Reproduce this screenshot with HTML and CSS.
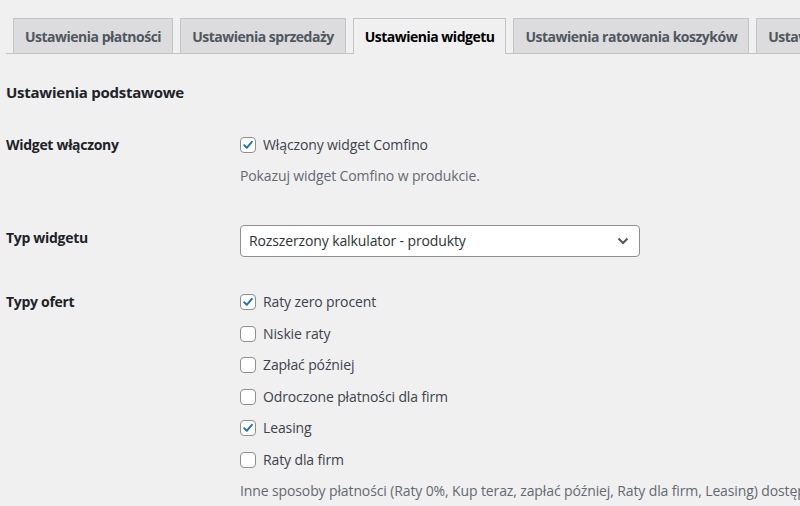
FILE: index.html
```html
<!DOCTYPE html>
<html lang="pl">
<head>
<meta charset="utf-8">
<link rel="stylesheet" href="styles.css">
</head>
<body>
<div class="wrap">
  <nav class="tabs">
    <a class="tab">Ustawienia płatności</a>
    <a class="tab">Ustawienia sprzedaży</a>
    <a class="tab active">Ustawienia widgetu</a>
    <a class="tab">Ustawienia ratowania koszyków</a>
    <a class="tab">Ustawienia zaawansowane</a>
  </nav>
  <h2 class="section-title">Ustawienia podstawowe</h2>

  <div class="row row-1">
    <div class="label">Widget włączony</div>
    <div class="field">
      <label class="check"><span class="box checked"><svg viewBox="0 0 16 16"><path d="M3.6 8.2 L6.6 11.2 L12.4 4.4"/></svg></span>Włączony widget Comfino</label>
      <p class="desc">Pokazuj widget Comfino w produkcie.</p>
    </div>
  </div>

  <div class="row row-2">
    <div class="label label-select">Typ widgetu</div>
    <div class="field">
      <div class="select">Rozszerzony kalkulator - produkty<svg class="chev" viewBox="0 0 12 8"><path d="M1.5 1.5 L6 6 L10.5 1.5"/></svg></div>
    </div>
  </div>

  <div class="row row-3">
    <div class="label">Typy ofert</div>
    <div class="field">
      <label class="check opt"><span class="box checked"><svg viewBox="0 0 16 16"><path d="M3.6 8.2 L6.6 11.2 L12.4 4.4"/></svg></span>Raty zero procent</label>
      <label class="check opt"><span class="box"></span>Niskie raty</label>
      <label class="check opt"><span class="box"></span>Zapłać później</label>
      <label class="check opt"><span class="box"></span>Odroczone płatności dla firm</label>
      <label class="check opt"><span class="box checked"><svg viewBox="0 0 16 16"><path d="M3.6 8.2 L6.6 11.2 L12.4 4.4"/></svg></span>Leasing</label>
      <label class="check opt"><span class="box"></span>Raty dla firm</label>
      <p class="desc desc-last">Inne sposoby płatności (Raty 0%, Kup teraz, zapłać później, Raty dla firm, Leasing) dostępne po zalogowaniu.</p>
    </div>
  </div>
</div>
</body>
</html>
```
FILE: styles.css
```css
html, body {
  margin: 0;
  padding: 0;
  background: #f0f0f1;
  overflow: hidden;
  width: 800px;
  height: 506px;
}
body {
  font-family: "Open Sans", "Noto Sans", sans-serif;
  font-size: 14px;
  letter-spacing: -0.12px;
  color: #3c434a;
}
.wrap {
  padding-left: 6px;
}
.tabs {
  display: flex;
  gap: 7px;
  padding: 18px 0 0 7px;
  border-bottom: 1px solid #c3c4c7;
  white-space: nowrap;
  height: 35px;
  box-sizing: content-box;
}
.tab {
  flex: none;
  display: block;
  background: #dcdcde;
  border: 1px solid #c3c4c7;
  border-bottom: none;
  padding: 5px 11px 5px 11px;
  line-height: 25px;
  font-weight: 700;
  letter-spacing: -0.5px;
  color: #50575e;
  font-size: 14px;
}
.tab.active {
  background: #f0f0f1;
  color: #000;
  margin-bottom: -1px;
  padding-bottom: 6px;
}
.section-title {
  margin: 28px 0 0;
  font-size: 15px;
  line-height: 20px;
  font-weight: 700;
  letter-spacing: -0.25px;
  color: #1d2327;
}
.row {
  display: grid;
  grid-template-columns: 234px 1fr;
}
.row-1 { padding-top: 33px; }
.row-2 { padding-top: 39px; }
.row-3 { padding-top: 35px; }
.label {
  font-weight: 700;
  letter-spacing: -0.3px;
  color: #1d2327;
  line-height: 20px;
}
.label-select { padding-top: 3px; }
.field { min-width: 0; }
.check {
  display: flex;
  align-items: center;
  gap: 7px;
  line-height: 20px;
  white-space: nowrap;
}
.opt { margin-bottom: 11.6px; }
.box {
  width: 16px;
  height: 16px;
  box-sizing: border-box;
  border: 1px solid #8c8f94;
  border-radius: 4px;
  background: #fff;
  display: inline-flex;
  flex: none;
}
.box svg {
  width: 14px;
  height: 14px;
  fill: none;
  stroke: #2271b1;
  stroke-width: 2.2;
  stroke-linecap: round;
  stroke-linejoin: round;
}
.desc {
  margin: 11px 0 0;
  line-height: 20px;
  color: #646970;
  white-space: nowrap;
}
.desc-last { margin-top: -0.6px; }
.select {
  width: 400px;
  height: 32px;
  box-sizing: border-box;
  border: 1px solid #8c8f94;
  border-radius: 4px;
  background: #fff;
  padding: 0 8px;
  display: flex;
  align-items: center;
  justify-content: space-between;
  color: #2c3338;
  line-height: 20px;
}
.chev {
  width: 12px;
  height: 8px;
  margin-right: 2px;
  fill: none;
  stroke: #50575e;
  stroke-width: 2;
}
```
